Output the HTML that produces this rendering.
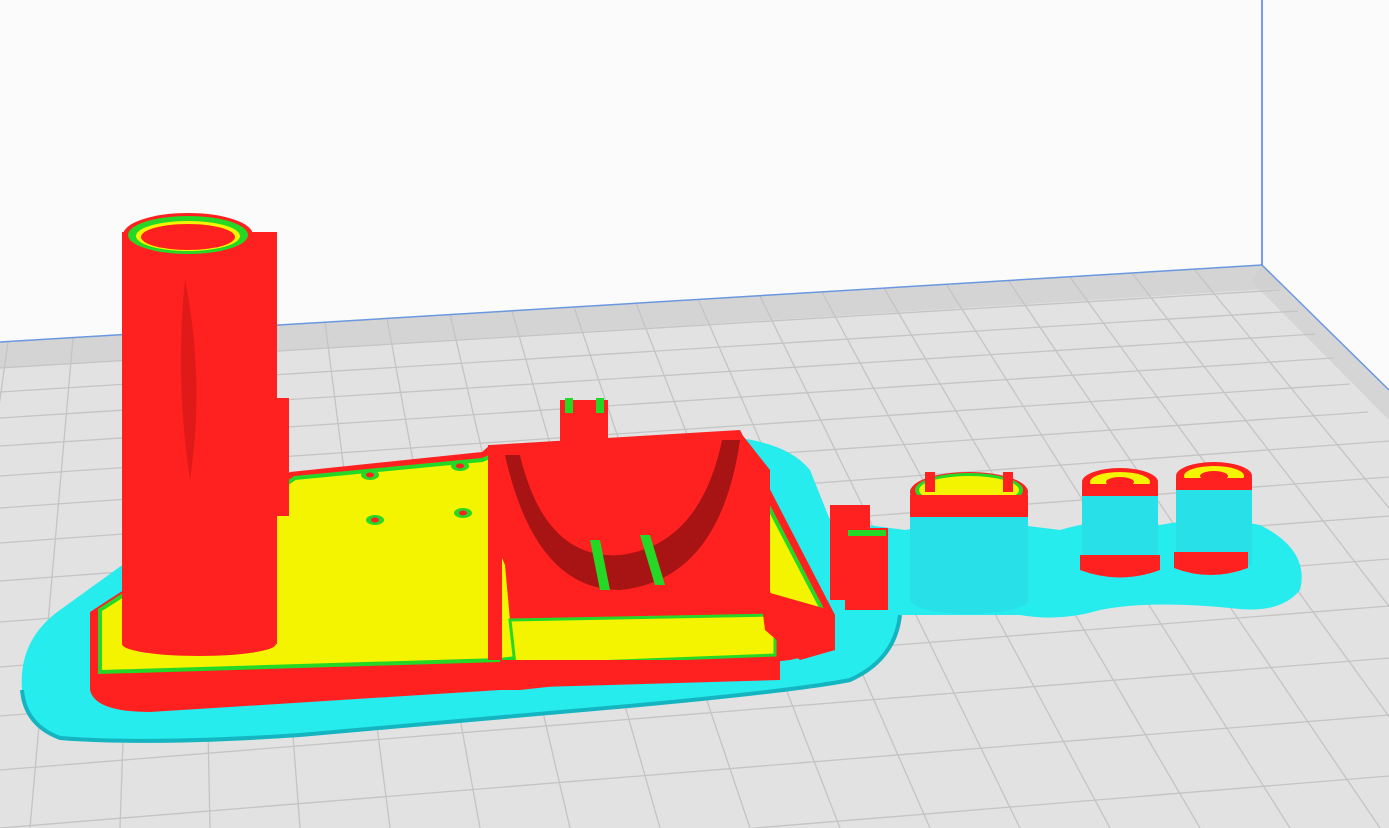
<!DOCTYPE html>
<html><head><style>
html,body{margin:0;padding:0;background:#fff;overflow:hidden;width:1389px;height:828px}
svg{display:block}
</style></head><body>
<svg width="1389" height="828" viewBox="0 0 1389 828" xmlns="http://www.w3.org/2000/svg" style="overflow:hidden">
<defs><clipPath id="c"><rect width="1389" height="828"/></clipPath></defs>
<g clip-path="url(#c)">
<rect width="1389" height="828" fill="#fbfbfb"/>
<polygon points="0,342 1262,265 1389,390 1389,828 0,828" fill="#e2e2e2"/>
<polygon points="0,342 1262,265 1285,288 0,368" fill="#cfcfcf" opacity="0.7"/>
<polygon points="1262,265 1389,390 1389,420 1252,282" fill="#d0d0d0" opacity="0.7"/>
<g stroke="#c4c4c4" stroke-width="1.3" fill="none">
<line x1="0" y1="368" x2="1280" y2="290"/>
<line x1="0" y1="392" x2="1298" y2="311"/>
<line x1="0" y1="418" x2="1315" y2="334"/>
<line x1="0" y1="446" x2="1333" y2="358"/>
<line x1="0" y1="476" x2="1350" y2="384"/>
<line x1="0" y1="508" x2="1368" y2="412"/>
<line x1="0" y1="543" x2="1389" y2="441"/>
<line x1="0" y1="581" x2="1389" y2="477"/>
<line x1="0" y1="622" x2="1389" y2="516"/>
<line x1="0" y1="667" x2="1389" y2="559"/>
<line x1="0" y1="716" x2="1389" y2="606"/>
<line x1="0" y1="770" x2="1389" y2="658"/>
<line x1="0" y1="828" x2="1389" y2="715"/>
<line x1="0" y1="890" x2="1389" y2="776"/>
</g>
<g stroke="#c4c4c4" stroke-width="1.3">
<line x1="8" y1="342" x2="-60" y2="828"/>
<line x1="73" y1="338" x2="30" y2="828"/>
<line x1="137" y1="334" x2="120" y2="828"/>
<line x1="200" y1="330" x2="210" y2="828"/>
<line x1="262" y1="326" x2="300" y2="828"/>
<line x1="325" y1="322" x2="390" y2="828"/>
<line x1="387" y1="318" x2="480" y2="828"/>
<line x1="450" y1="314" x2="570" y2="828"/>
<line x1="512" y1="311" x2="660" y2="828"/>
<line x1="574" y1="307" x2="750" y2="828"/>
<line x1="636" y1="303" x2="840" y2="828"/>
<line x1="698" y1="299" x2="930" y2="828"/>
<line x1="760" y1="296" x2="1020" y2="828"/>
<line x1="822" y1="292" x2="1110" y2="828"/>
<line x1="884" y1="288" x2="1200" y2="828"/>
<line x1="946" y1="284" x2="1290" y2="828"/>
<line x1="1008" y1="280" x2="1380" y2="828"/>
<line x1="1070" y1="277" x2="1470" y2="828"/>
<line x1="1132" y1="273" x2="1560" y2="828"/>
<line x1="1194" y1="269" x2="1650" y2="828"/>
</g>
<line x1="0" y1="342" x2="1262" y2="265" stroke="#6a98e0" stroke-width="1.5"/>
<line x1="1262" y1="0" x2="1262" y2="265" stroke="#4a7fe0" stroke-width="1.5"/>
<line x1="1262" y1="265" x2="1389" y2="390" stroke="#6a98e0" stroke-width="1.5"/>
<path d="M22,690 Q18,640 60,610 L240,480 L740,438 Q790,445 810,470 L830,520 L905,530 Q960,520 1020,525 L1060,530 Q1110,515 1160,525 Q1210,515 1260,525 Q1310,550 1300,590 Q1280,615 1230,608 Q1150,600 1100,610 Q1060,622 1020,615 L900,615 Q895,660 850,680 Q800,690 640,705 L300,735 Q150,745 60,738 Q25,725 22,690Z" fill="#26ecee"/>
<path d="M22,690 Q25,725 60,738 Q150,745 300,735 L640,705 Q800,690 850,680 Q895,660 900,615" fill="none" stroke="#14b5c0" stroke-width="4"/>
<path d="M90,612 L170,560 L290,472 L482,452 L490,445 L740,430 L760,470 L835,615 L835,650 L790,660 L520,690 L500,690 L150,712 Q95,712 90,690Z" fill="#ff2020"/>
<path d="M100,610 L175,562 L295,478 L482,460 L495,455 L735,442 L752,475 L825,615 L790,625 L500,660 L100,672Z" fill="#f4f400" stroke="#25d825" stroke-width="4"/>
<path d="M490,452 L740,432 L770,470 L770,590 L775,625 L510,620 L505,565 L490,530Z" fill="#ff2020"/>
<path d="M510,620 L775,615 L775,655 L515,665Z" fill="#f4f400" stroke="#25d825" stroke-width="3"/>
<path d="M500,660 L780,660 L780,680 L505,688Z" fill="#ff2020"/>
<path d="M505,455 Q535,590 620,590 Q720,580 740,440 L722,440 Q700,545 620,555 Q545,560 520,455Z" fill="#a81414"/>
<path d="M520,455 Q545,560 620,555 Q700,545 722,440 Z" fill="#ff2020"/>
<path d="M590,540 L600,590 L610,590 L600,540Z M640,535 L655,585 L665,585 L650,535Z" fill="#25d825"/>
<rect x="488" y="445" width="14" height="215" fill="#ff2020"/>
<path d="M760,590 L830,610 L835,650 L800,660 L765,630Z" fill="#ff2020"/>
<ellipse cx="370" cy="475" rx="9" ry="5" fill="#25d825"/><ellipse cx="370" cy="475" rx="4" ry="2.5" fill="#ff2020"/>
<ellipse cx="460" cy="466" rx="9" ry="5" fill="#25d825"/><ellipse cx="460" cy="466" rx="4" ry="2.5" fill="#ff2020"/>
<ellipse cx="375" cy="520" rx="9" ry="5" fill="#25d825"/><ellipse cx="375" cy="520" rx="4" ry="2.5" fill="#ff2020"/>
<ellipse cx="463" cy="513" rx="9" ry="5" fill="#25d825"/><ellipse cx="463" cy="513" rx="4" ry="2.5" fill="#ff2020"/>
<rect x="263" y="398" width="26" height="118" fill="#ff2020"/>
<rect x="265" y="402" width="8" height="20" fill="#25d825"/>
<path d="M560,400 L608,400 L608,465 L566,468 L560,462Z" fill="#ff2020"/>
<rect x="565" y="398" width="8" height="15" fill="#25d825"/><rect x="596" y="398" width="8" height="15" fill="#25d825"/>
<rect x="830" y="505" width="40" height="95" fill="#ff2020"/>
<rect x="845" y="528" width="43" height="82" fill="#ff2020"/>
<rect x="848" y="530" width="38" height="6" fill="#25d825"/>
<rect x="122" y="232" width="155" height="412" fill="#ff2020"/>
<ellipse cx="199" cy="644" rx="77" ry="12" fill="#ff2020"/>
<ellipse cx="188" cy="235" rx="65" ry="22" fill="#ff2020"/>
<ellipse cx="188" cy="235" rx="60" ry="19" fill="#25d825"/>
<ellipse cx="188" cy="236" rx="52" ry="15" fill="#f4f400"/>
<ellipse cx="188" cy="237" rx="47" ry="13" fill="#ff2020"/>
<path d="M185,280 Q175,380 190,480 Q205,380 185,280Z" fill="#cc1515" opacity="0.6"/>
<rect x="910" y="490" width="118" height="110" fill="#28e0e8"/>
<ellipse cx="969" cy="600" rx="59" ry="14" fill="#28e0e8"/>
<ellipse cx="969" cy="492" rx="59" ry="20" fill="#ff2020"/>
<ellipse cx="969" cy="490" rx="54" ry="17" fill="#25d825"/>
<ellipse cx="969" cy="490" rx="50" ry="14" fill="#f4f400"/>
<rect x="910" y="495" width="118" height="22" fill="#ff2020"/>
<rect x="925" y="472" width="10" height="20" fill="#ff2020"/><rect x="1003" y="472" width="10" height="20" fill="#ff2020"/>
<rect x="1082" y="480" width="76" height="88" fill="#28e0e8"/>
<ellipse cx="1120" cy="482" rx="38" ry="14" fill="#ff2020"/>
<ellipse cx="1120" cy="482" rx="30" ry="10" fill="#f4f400"/>
<ellipse cx="1120" cy="482" rx="14" ry="5" fill="#ff2020"/>
<rect x="1082" y="484" width="76" height="12" fill="#ff2020"/>
<path d="M1080,555 L1160,555 L1160,570 Q1120,585 1080,570Z" fill="#ff2020"/>
<rect x="1176" y="475" width="76" height="90" fill="#28e0e8"/>
<ellipse cx="1214" cy="476" rx="38" ry="14" fill="#ff2020"/>
<ellipse cx="1214" cy="476" rx="30" ry="10" fill="#f4f400"/>
<ellipse cx="1214" cy="476" rx="14" ry="5" fill="#ff2020"/>
<rect x="1176" y="478" width="76" height="12" fill="#ff2020"/>
<path d="M1174,552 L1248,552 L1248,568 Q1210,582 1174,568Z" fill="#ff2020"/>
</g>
</svg>
</body></html>
